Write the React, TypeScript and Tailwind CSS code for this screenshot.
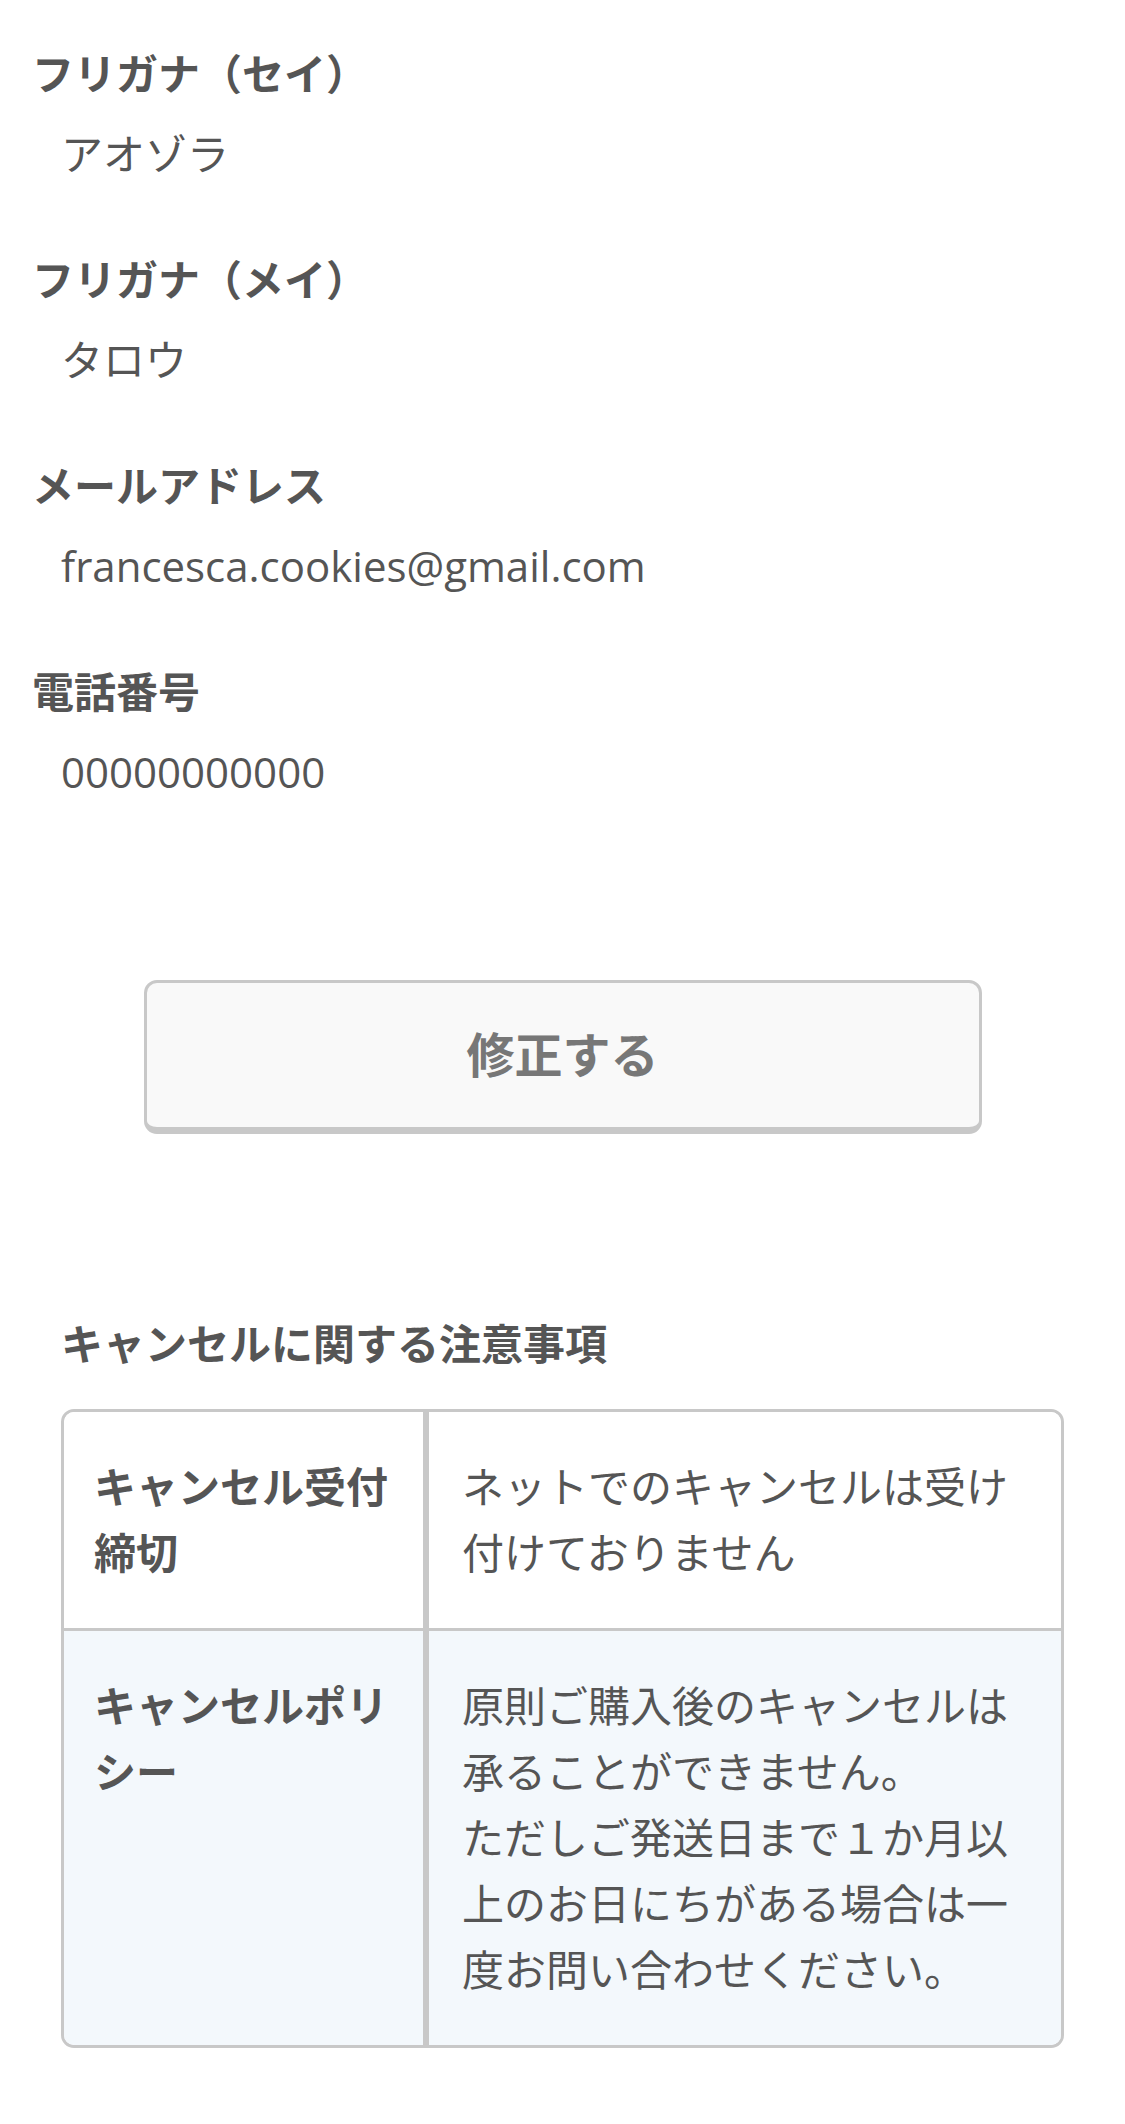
const FONT = "font-['Open_Sans','Noto_Sans_CJK_JP',sans-serif]"

const PROFILE = [
  { label: 'フリガナ（セイ）', value: 'アオゾラ' },
  { label: 'フリガナ（メイ）', value: 'タロウ' },
  { label: 'メールアドレス', value: 'francesca.cookies@gmail.com' },
  { label: '電話番号', value: '00000000000' },
]

function Field({ label, value }: { label: string; value: string }) {
  return (
    <div>
      <div className="text-[42px] leading-[60px] font-bold text-[#555555]">{label}</div>
      <div className="mt-[20px] pl-[29px] text-[42px] leading-[60px] text-[#555555]">{value}</div>
    </div>
  )
}

export default function App() {
  return (
    <div className={`${FONT} min-h-[2124px] bg-white pb-[80px] text-[#555555]`}>
      <section className="flex flex-col gap-[66px] px-[32px] pt-[44px]">
        {PROFILE.map((f) => (
          <Field key={f.label} label={f.label} value={f.value} />
        ))}
      </section>

      <div className="mt-[178px] flex justify-center">
        <button
          type="button"
          className="h-[154px] w-[838px] rounded-[13px] border-[3px] border-b-[7px] border-[#c8c8c8] bg-[#f9f9f9] text-[48px] font-bold text-[#777777]"
        >
          修正する
        </button>
      </div>

      <section className="mt-[180px] px-[61px]">
        <h2 className="text-[42px] leading-[60px] font-bold text-[#555555]">キャンセルに関する注意事項</h2>

        <div className="mt-[35px] overflow-hidden rounded-[13px] border-[3px] border-[#c8c8c8]">
          <div className="grid grid-cols-[365px_1fr] border-b-[3px] border-[#c8c8c8] bg-white">
            <div className="border-r-[6px] border-[#c8c8c8] px-[30px] py-[42px] text-[42px] leading-[66px] font-bold">
              キャンセル受付締切
            </div>
            <div className="px-[33px] py-[42px] text-[42px] leading-[66px]">
              ネットでのキャンセルは受け付けておりません
            </div>
          </div>
          <div className="grid grid-cols-[365px_1fr] bg-[#f3f8fc]">
            <div className="border-r-[6px] border-[#c8c8c8] px-[30px] py-[42px] text-[42px] leading-[66px] font-bold">
              キャンセルポリシー
            </div>
            <div className="px-[33px] py-[42px] text-[42px] leading-[66px]">
              原則ご購入後のキャンセルは承ることができません。
              <br />
              ただしご発送日まで１か月以上のお日にちがある場合は一度お問い合わせください。
            </div>
          </div>
        </div>
      </section>
    </div>
  )
}
